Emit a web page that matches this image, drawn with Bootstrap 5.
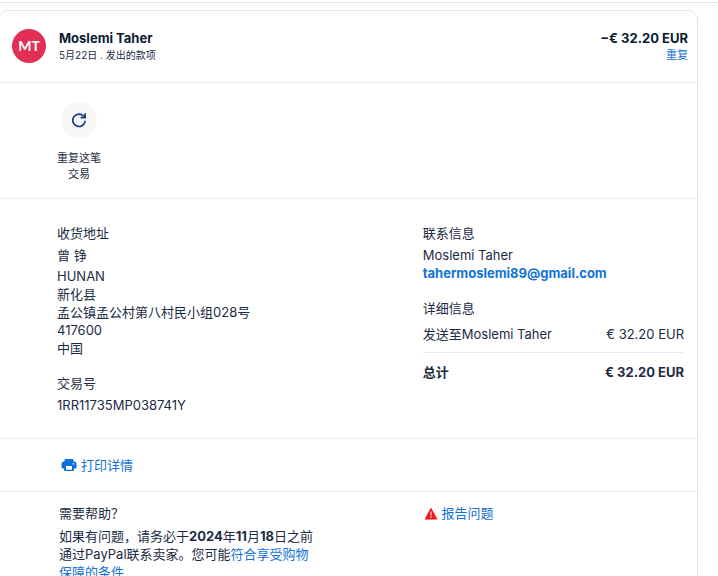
<!DOCTYPE html>
<html lang="zh-CN">
<head>
<meta charset="utf-8">
<meta name="viewport" content="width=device-width, initial-scale=1">
<title>交易详情</title>
<link href="https://cdn.jsdelivr.net/npm/bootstrap@5.3.0/dist/css/bootstrap.min.css" rel="stylesheet">
<style>
body{font-family:Inter,"Noto Sans CJK SC",sans-serif;font-size:13px;line-height:18px;color:#1c2b45;background:#fff;overflow-x:hidden}
a{color:#1072d6;text-decoration:none}
.topline{height:3px;border-bottom:1px solid #e6e7e9}
.txn{margin:7px 20px 0 -2px;border:1px solid #e2e4e7;border-radius:10px;overflow:hidden}
.sect{border-bottom:1px solid #eaebed}
.head{padding:18px 9px 16px 13px;min-height:72px}
.avatar{width:34px;height:34px;background:#e22f55;color:#fff;font:700 14px/34px Lato,sans-serif}
.who-col{margin-left:13px}
.strong-line{font-weight:700;color:#0b1a33}
.fine{font-size:11px;line-height:16px}
.when{font-size:10px;line-height:16px}
.repeat-area{padding:19px 12px 16px 49px;min-height:115px}
.repeat-btn{width:62px;color:#1c2b45}
.disc{width:36px;height:36px;background:#f9f7f5}
.body-pad{padding-left:58px;padding-right:13px}
.details{padding-top:25px;padding-bottom:24px}
.ttl{font-size:13px;line-height:18px;font-weight:400;margin:0 0 4px}
.gap-block{margin-top:17px}
.who{margin-bottom:3px}
.sum{border-top:1px solid #eaebed}
.amounts th,.amounts td{font-weight:400;padding:4px 0 9px}
.amounts .sum th,.amounts .sum td{font-weight:700;padding:10px 0 0}
.printrow{padding-top:17px;padding-bottom:17px}
.help{padding-top:12px;padding-left:60px;padding-bottom:32px}
.help-copy{max-width:260px}
.help .ttl{margin-bottom:5px}
b{font-weight:700}
</style>
<script src="https://cdn.jsdelivr.net/npm/bootstrap@5.3.0/dist/js/bootstrap.bundle.min.js"></script>
</head>
<body>
<div class="topline"></div>
<main class="txn">
  <header class="sect head d-flex align-items-start">
    <div class="avatar rounded-circle text-center flex-shrink-0">MT</div>
    <div class="who-col flex-grow-1 d-flex flex-column">
      <div class="strong-line">Moslemi Taher</div>
      <div class="when">5月22日 . 发出的款项</div>
    </div>
    <div class="text-end">
      <div class="strong-line">−€ 32.20 EUR</div>
      <a class="fine d-block" href="#">重复</a>
    </div>
  </header>
  <section class="sect repeat-area">
    <button type="button" class="repeat-btn btn p-0 border-0 fine d-flex flex-column align-items-center">
      <span class="disc rounded-circle d-flex align-items-center justify-content-center mb-2">
        <svg width="16" height="16" viewBox="0 0 16 16" fill="none" stroke="#1c3a80" stroke-width="1.7" aria-hidden="true"><path d="M14.200 8.700A6.200 6.200 0 1 1 12.700 4.200"/><path d="M14.100 1.300V5.700H9.600"/><path d="M14 2.800v3h-3z" fill="#1c3a80" stroke="none"/></svg>
      </span>
      <span class="pt-1">重复这笔<br>交易</span>
    </button>
  </section>
  <section class="sect details body-pad">
    <div class="row g-0">
      <div class="col-7">
        <h2 class="ttl">收货地址</h2>
        <div class="who">曾 铮</div>
        <address class="m-0">HUNAN<br>新化县<br>孟公镇孟公村第八村民小组028号<br>417600<br>中国</address>
        <h2 class="ttl gap-block">交易号</h2>
        <div>1RR11735MP038741Y</div>
      </div>
      <div class="col-5">
        <h2 class="ttl">联系信息</h2>
        <div>Moslemi Taher</div>
        <a class="fw-bold" href="mailto:tahermoslemi89@gmail.com">tahermoslemi89@gmail.com</a>
        <h2 class="ttl gap-block">详细信息</h2>
        <table class="amounts w-100">
          <tbody>
            <tr><th scope="row">发送至Moslemi Taher</th><td class="text-end">€ 32.20 EUR</td></tr>
            <tr class="sum"><th scope="row">总计</th><td class="text-end">€ 32.20 EUR</td></tr>
          </tbody>
        </table>
      </div>
    </div>
  </section>
  <section class="sect printrow body-pad d-flex">
    <a class="d-flex align-items-center ms-1" href="#">
      <svg class="me-1" width="16" height="14" viewBox="0 0 16 14" aria-hidden="true"><path fill="#0e6fdb" d="M4.500 1h7a1 1 0 0 1 1 1v1.500h.5a2.500 2.500 0 0 1 2.500 2.500v3a1.500 1.500 0 0 1-1.500 1.500h-1V12a1 1 0 0 1-1 1h-8a1 1 0 0 1-1-1v-1.500H2A1.500 1.500 0 0 1 .5 9V6A2.500 2.500 0 0 1 3 3.500h.5V2a1 1 0 0 1 1-1z"/><path fill="#fff" d="M5 8h6v3.700H5zM11.600 5.200h1.500v1.300h-1.500z"/></svg>
      打印详情
    </a>
  </section>
  <section class="help body-pad">
    <div class="row g-0">
      <div class="col-7">
        <h2 class="ttl">需要帮助？</h2>
        <p class="help-copy m-0">如果有问题，请务必于<b>2024</b>年<b>11</b>月<b>18</b>日之前通过PayPal联系卖家。您可能<a href="#">符合享受购物保障的条件</a></p>
      </div>
      <div class="col-5 d-flex align-items-start">
        <a class="d-flex align-items-center" href="#">
          <svg class="me-1" width="14" height="13" viewBox="0 0 14 13" aria-hidden="true"><path fill="#f5141b" d="M7 .4 13.500 12.600H.5z"/><path stroke="#fff" stroke-opacity=".8" stroke-width="1.300" d="M7 4.500v4M7 9.600V11"/></svg>
          报告问题
        </a>
      </div>
    </div>
  </section>
</main>
</body>
</html>
